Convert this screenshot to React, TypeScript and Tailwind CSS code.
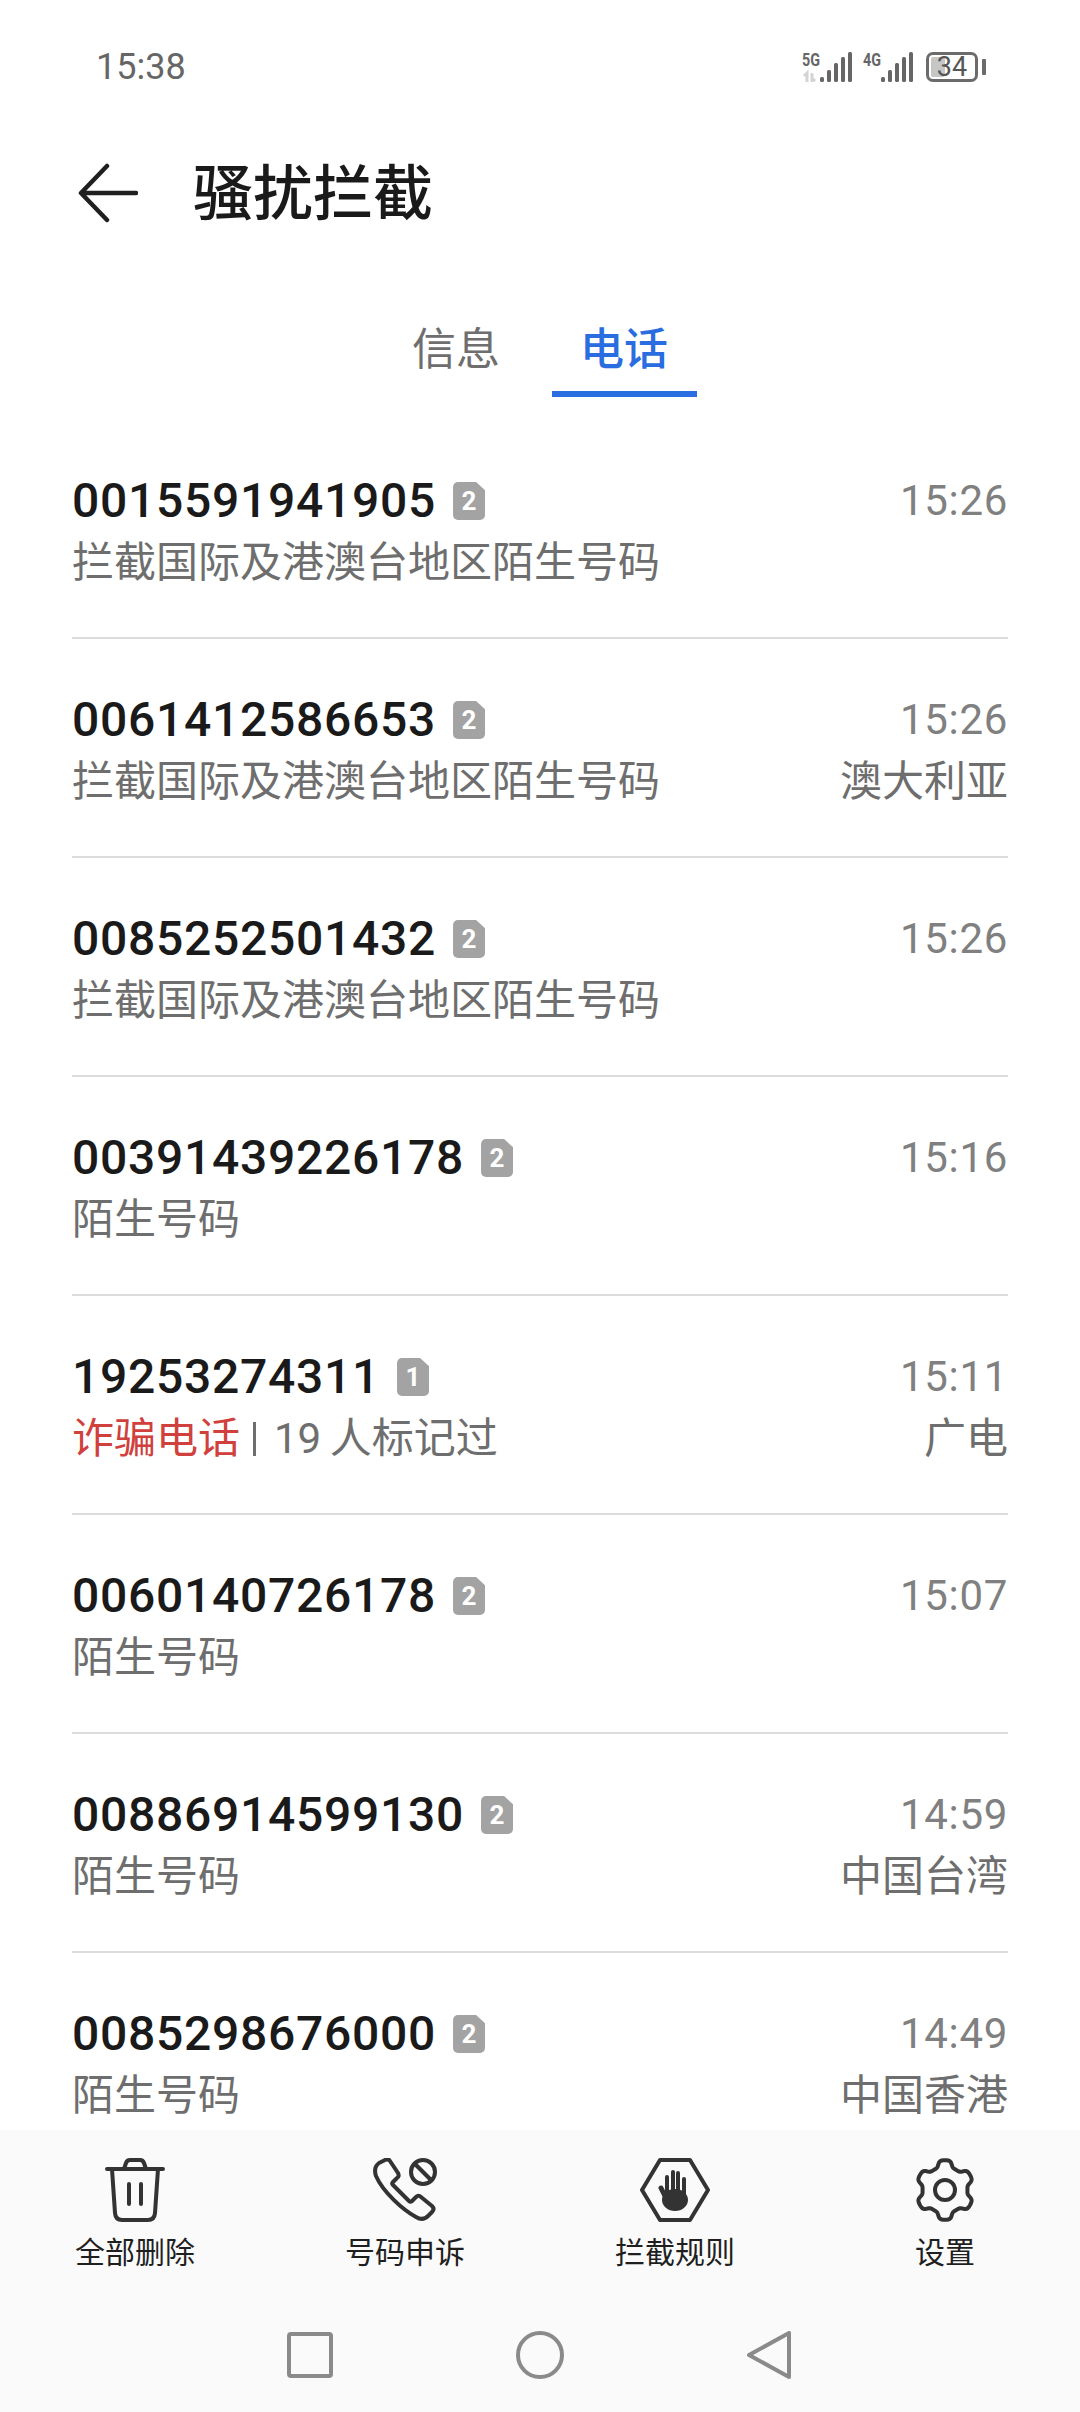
const records = [
  { phone: "0015591941905", sim: 2, time: "15:26", note: "拦截国际及港澳台地区陌生号码" },
  { phone: "0061412586653", sim: 2, time: "15:26", note: "拦截国际及港澳台地区陌生号码", place: "澳大利亚" },
  { phone: "0085252501432", sim: 2, time: "15:26", note: "拦截国际及港澳台地区陌生号码" },
  { phone: "00391439226178", sim: 2, time: "15:16", note: "陌生号码" },
  { phone: "19253274311", sim: 1, time: "15:11", fraud: true, place: "广电" },
  { phone: "0060140726178", sim: 2, time: "15:07", note: "陌生号码" },
  { phone: "00886914599130", sim: 2, time: "14:59", note: "陌生号码", place: "中国台湾" },
  { phone: "0085298676000", sim: 2, time: "14:49", note: "陌生号码", place: "中国香港" },
];

function gearPath() {
  const pts: string[] = [];
  for (let i = 0; i < 180; i++) {
    const a = (i / 180) * Math.PI * 2;
    const r = 26.5 + 3.5 * Math.tanh(2 * Math.cos(6 * (a + Math.PI / 2)));
    pts.push(`${(32 + r * Math.cos(a) * 0.97).toFixed(2)} ${(32 + r * Math.sin(a)).toFixed(2)}`);
  }
  return `M${pts.join("L")}Z`;
}

function Signal({ label, arrows }: { label: string; arrows?: boolean }) {
  return (
    <svg className="-mt-[6px]" width="50" height="36" viewBox="0 -6 50 36">
      <text
        x="0"
        y="14"
        textLength="18"
        lengthAdjust="spacingAndGlyphs"
        fontSize="19"
        fontWeight="700"
        fontFamily="Roboto, sans-serif"
        fill="#666666"
      >
        {label}
      </text>
      {arrows && (
        <path d="M5 30v-9l-3 3M10 21v9l3-3" fill="none" stroke="#d4d4d4" strokeWidth="3" />
      )}
      <g fill="#666666">
        <rect x="18" y="25" width="4" height="5" rx="1.5" />
        <rect x="25" y="18" width="4" height="12" rx="1.5" />
        <rect x="32" y="11" width="4" height="19" rx="1.5" />
        <rect x="39" y="5" width="4" height="25" rx="1.5" />
        <rect x="46" y="0" width="4" height="30" rx="1.5" />
      </g>
    </svg>
  );
}

function SimBadge({ n }: { n: number }) {
  return (
    <span className="ml-[17px] flex h-[38px] w-[32px] items-center justify-center rounded-[5px] bg-[#a3a3a3] text-[26px] font-bold leading-none text-white [clip-path:polygon(0_0,72%_0,100%_22%,100%_100%,0_100%)]">
      {n}
    </span>
  );
}

function Row({ r }: { r: (typeof records)[number] }) {
  return (
    <div className="mx-[72px] h-[219px] border-b-2 border-[#dcdcdc] pt-[50px]">
      <div className="flex h-[62px] items-center justify-between">
        <div className="flex items-center">
          <span className="text-[48px] font-[460] leading-[62px] tracking-[0.72px] text-[#1a1a1a]">
            {r.phone}
          </span>
          <SimBadge n={r.sim} />
        </div>
        <span className="text-[42px] leading-[62px] tracking-[0.7px] text-[#808080]">{r.time}</span>
      </div>
      <div className="flex h-[62px] items-center justify-between text-[42px] leading-[62px] text-[#6e6e6e]">
        {r.fraud ? (
          <div className="flex items-center">
            <span className="text-[#d0403c]">诈骗电话</span>
            <span className="ml-[13px] mr-[18px] h-[34px] w-[3px] bg-[#6e6e6e]" />
            <span className="[word-spacing:-2px]">19 人标记过</span>
          </div>
        ) : (
          <span>{r.note}</span>
        )}
        {r.place && <span>{r.place}</span>}
      </div>
    </div>
  );
}

export default function App() {
  return (
    <div className="flex h-[2412px] w-[1080px] flex-col overflow-hidden bg-white font-['Roboto','Noto_Sans_CJK_SC',sans-serif]">
      {/* status bar */}
      <div className="flex h-[134px] shrink-0 items-center justify-between pl-[96px] pr-[94px]">
        <span className="text-[36px] leading-none text-[#666666]">15:38</span>
        <div className="flex items-center">
          <Signal label="5G" arrows />
          <div className="ml-[11px]">
            <Signal label="4G" />
          </div>
          <div className="relative ml-[13px] flex h-[30px] w-[52px] items-center justify-center rounded-[7px] border-[3px] border-[#6b6b6b]">
            <div className="absolute bottom-[2px] left-[2px] top-[2px] w-[14px] rounded-[2px] bg-[#c6c6c6]" />
            <span className="relative text-[27px] leading-none text-[#555555]">34</span>
          </div>
          <div className="ml-[4px] h-[16px] w-[4px] rounded-[1px] bg-[#6b6b6b]" />
        </div>
      </div>

      {/* title */}
      <div className="flex h-[116px] shrink-0 items-center pl-[78px]">
        <svg className="mt-[2px]" width="60" height="60" viewBox="0 0 60 60" fill="none" stroke="#1f1f1f" strokeWidth="4.5" strokeLinecap="round" strokeLinejoin="round">
          <path d="M58 30H4M29 3 3 30l26 27" />
        </svg>
        <h1 className="ml-[55px] mt-[5px] text-[60px] font-medium leading-none text-[#1a1a1a]">骚扰拦截</h1>
      </div>

      {/* tabs */}
      <div className="mt-[60px] flex shrink-0 justify-center gap-[23px]">
        <div className="flex h-[87px] w-[145px] flex-col items-center pt-[2px]">
          <span className="text-[44px] leading-[76px] text-[#6e6e6e]">信息</span>
        </div>
        <div className="flex h-[87px] w-[145px] flex-col items-center justify-between pt-[2px]">
          <span className="text-[44px] font-medium leading-[76px] text-[#2a6de0]">电话</span>
          <div className="h-[6px] w-full bg-[#2a6de0]" />
        </div>
      </div>

      {/* blocked calls */}
      <div className="mt-[23px] min-h-0 flex-1 overflow-hidden">
        {records.map((r) => (
          <Row key={r.phone} r={r} />
        ))}
      </div>

      {/* bottom actions */}
      <div className="h-[282px] shrink-0 bg-[#fafafa] pt-[28px]">
        <div className="grid grid-cols-4 text-[30px] leading-[40px] text-[#1f1f1f]">
          <div className="flex flex-col items-center gap-[11px]">
            <svg width="64" height="64" viewBox="0 0 64 64" fill="none" stroke="#333333" strokeWidth="4" strokeLinecap="round" strokeLinejoin="round">
              <path d="M4 11h56M21 11l2-6q1-3 4-3h10q3 0 4 3l2 6M9 11l3 44q.5 7 7 7h26q6.5 0 7-7l3-44M26 26v20M38 26v20" />
            </svg>
            <span>全部删除</span>
          </div>
          <div className="flex flex-col items-center gap-[11px]">
            <svg width="64" height="64" viewBox="0 0 64 64" fill="none" stroke="#333333" strokeWidth="4" strokeLinecap="round" strokeLinejoin="round">
              <path d="M12 2c2-1 4-.5 5 1l8 12c1 2 1 4-1 5l-4 4c-1 1-1 2 0 3l16 16c1 1 2 1 3 0l4-4c1.500-1.500 3.500-1.500 5 0l11 9c2 2 2 4 0 6l-4 4c-3 3-7 4-12 1C30 52 10 34 3 18 1 12 2 8 6 5z" />
              <circle cx="50" cy="14" r="12" />
              <path d="m42 6 16 16" />
            </svg>
            <span>号码申诉</span>
          </div>
          <div className="flex flex-col items-center gap-[11px]">
            <svg width="70" height="64" viewBox="0 0 70 64" fill="none" stroke="#333333" strokeWidth="4" strokeLinecap="round" strokeLinejoin="round">
              <path d="M20 2h30l18 30-18 30H20L2 32z" />
              <g strokeWidth="4">
                <path d="M27 38V19M33 38V14M38 38V15M44 38V21" />
                <path d="M21 30l6 12" strokeWidth="5" />
              </g>
              <ellipse cx="35" cy="42" rx="13" ry="11" fill="#333333" stroke="none" />
            </svg>
            <span>拦截规则</span>
          </div>
          <div className="flex flex-col items-center gap-[11px]">
            <svg width="64" height="64" viewBox="0 0 64 64" fill="none" stroke="#333333" strokeWidth="4" strokeLinejoin="round">
              <path d={gearPath()} />
              <circle cx="32" cy="32" r="10" />
            </svg>
            <span>设置</span>
          </div>
        </div>

        {/* navigation bar */}
        <div className="mt-[58px] flex items-center justify-center gap-[183px] pr-[3px]">
          <svg width="46" height="46" viewBox="0 0 46 46" fill="none" stroke="#8a8a8a" strokeWidth="4">
            <rect x="2" y="2" width="42" height="42" rx="2" />
          </svg>
          <svg width="48" height="48" viewBox="0 0 48 48" fill="none" stroke="#8a8a8a" strokeWidth="4">
            <circle cx="24" cy="24" r="22" />
          </svg>
          <svg width="44" height="48" viewBox="0 0 44 48" fill="none" stroke="#8a8a8a" strokeWidth="4" strokeLinejoin="round">
            <path d="M42 2v44L2 24z" />
          </svg>
        </div>
      </div>
    </div>
  );
}
